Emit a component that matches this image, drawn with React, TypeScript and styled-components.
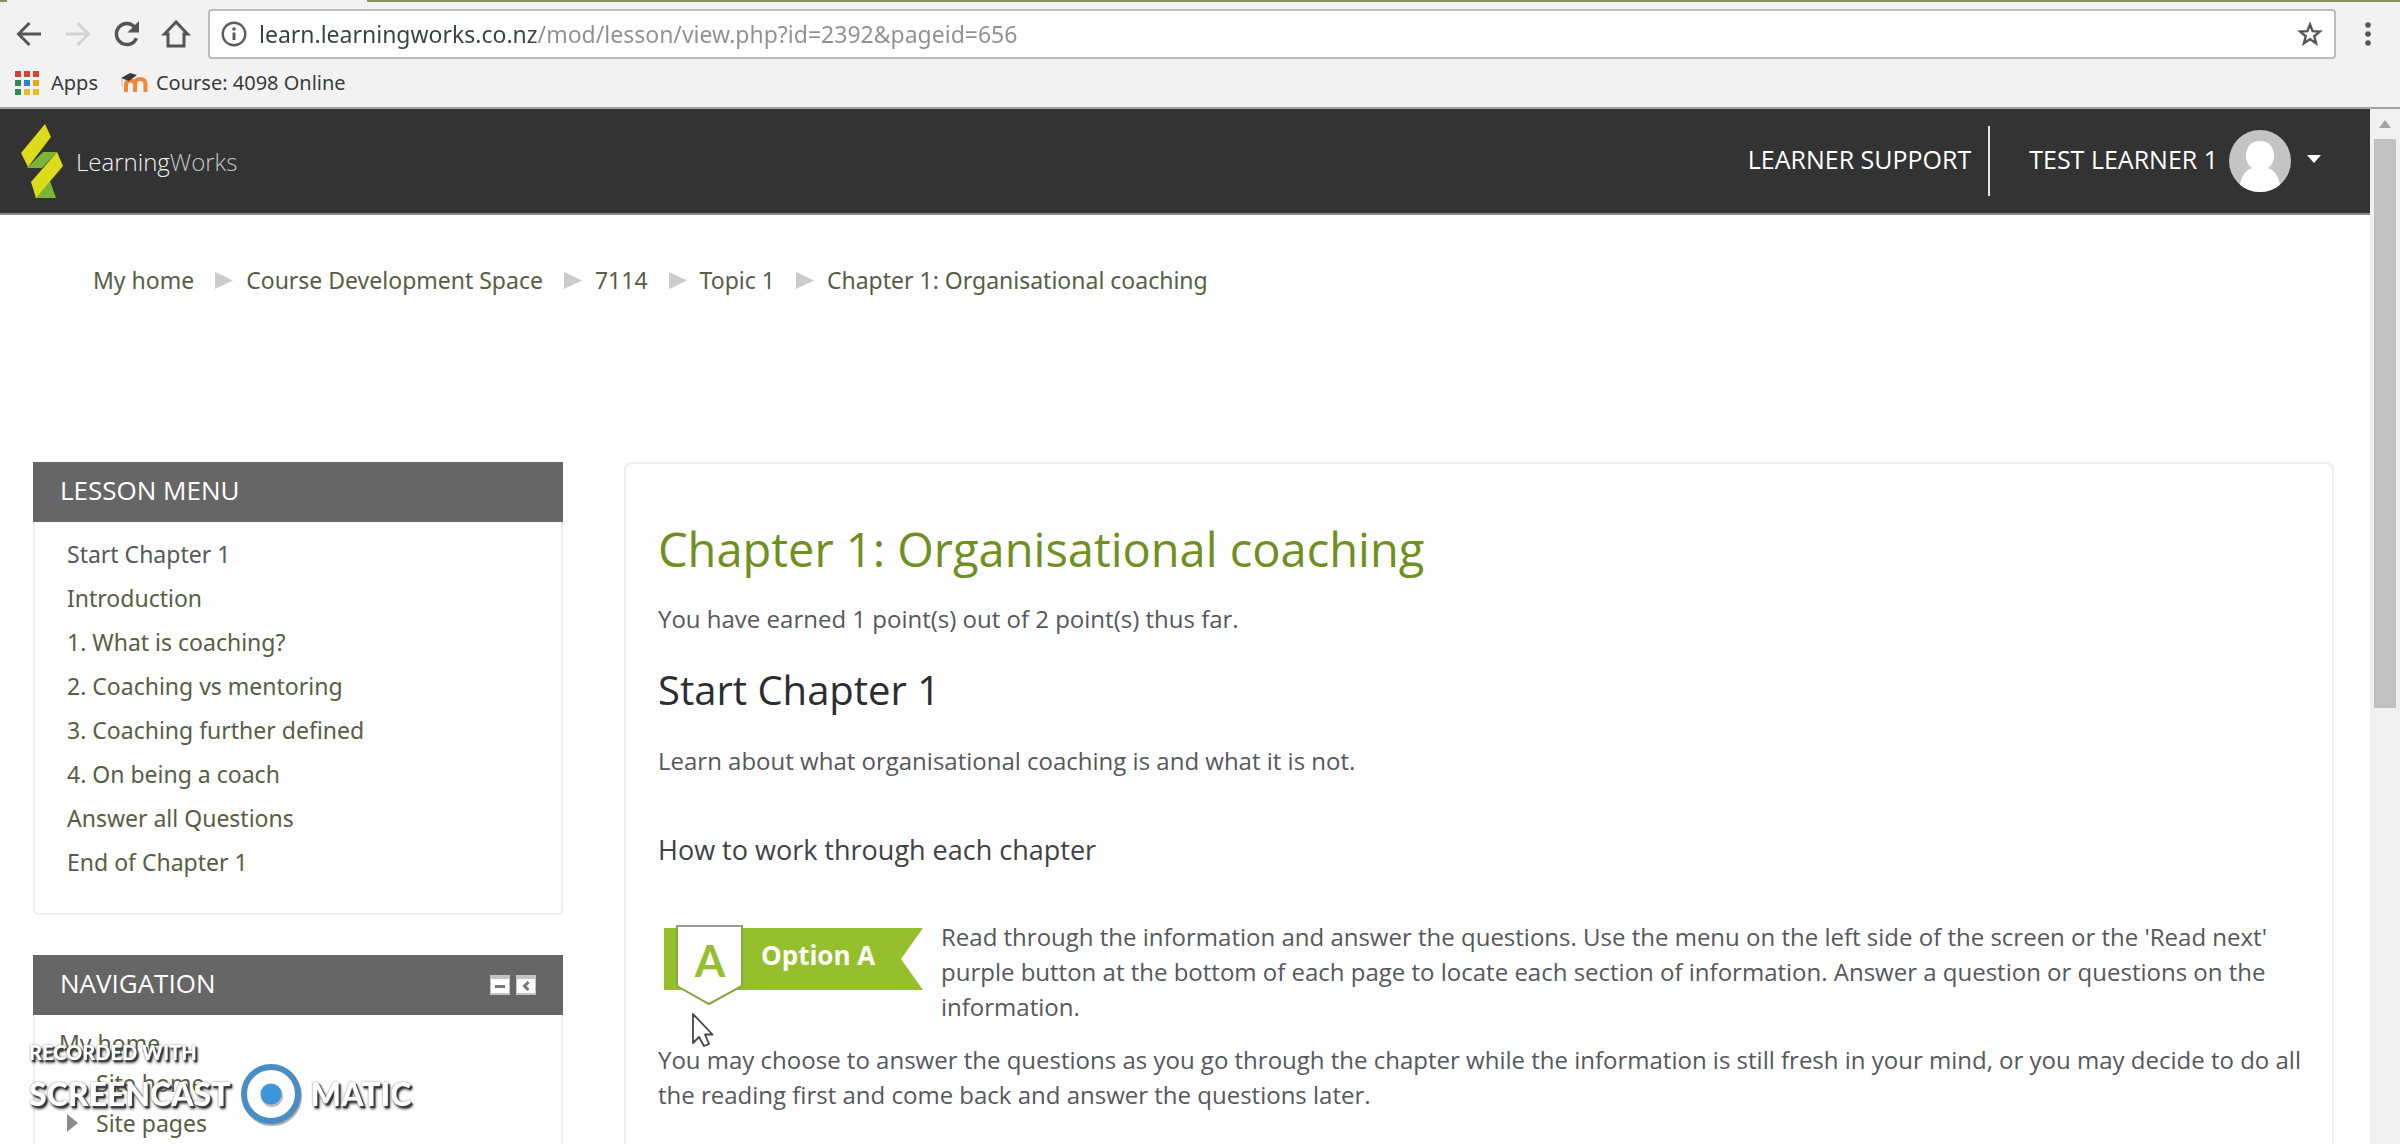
import React from "react";
import styled, { createGlobalStyle } from "styled-components";

const sans = `"Open Sans", "Noto Sans", sans-serif`;
const compact = `"Noto Sans", "Open Sans", sans-serif`;

const color = {
  chrome: "#f2f2f2",
  ink: "#333333",
  body: "#55585c",
  link: "#565f45",
  green: "#6f8f1f",
  banner: "#95bf2d",
  blockHead: "#666666",
  line: "#ededed",
};

const GlobalStyle = createGlobalStyle`
  *, *::before, *::after { box-sizing: border-box; }
  body { margin: 0; background: #fefefe; font-family: ${sans}; color: ${color.body}; }
  h1, h2, h3, p, ul, ol { margin: 0; padding: 0; font-weight: 400; }
  ul, ol { list-style: none; }
  a { color: inherit; text-decoration: none; }
  button { border: 0; padding: 0; background: none; font: inherit; color: inherit; }
`;

const Window = styled.div`
  display: flex;
  flex-direction: column;
  height: 100vh;
  overflow: hidden;
`;

/* Browser chrome */

const Chrome = styled.div`
  flex: none;
  background: ${color.chrome};
  border-bottom: 2px solid #a3a3a3;
  font-family: ${compact};
`;

const TabStrip = styled.div`
  display: grid;
  grid-template-columns: 7px 360px 1fr;
  height: 2px;
`;

const Frame = styled.div`
  background: #8b8b66;
`;

const Toolbar = styled.div`
  display: flex;
  align-items: center;
  padding: 7px 0 0 4px;
`;

const ToolButton = styled.button<{ $wide?: boolean }>`
  flex: none;
  display: grid;
  place-items: center;
  width: ${(p) => (p.$wide ? 64 : 49)}px;
  height: 48px;
`;

const Omnibox = styled.form`
  flex: 1;
  min-width: 0;
  display: flex;
  align-items: center;
  gap: 12px;
  height: 50px;
  margin-left: 8px;
  padding: 0 8px 0 11px;
  background: #fff;
  border: 2px solid #bcbcbc;
  border-radius: 4px;
`;

const Address = styled.input`
  flex: 1;
  min-width: 0;
  height: 100%;
  padding: 0;
  border: 0;
  outline: 0;
  font: 23px ${compact};
  color: transparent;
  background: linear-gradient(90deg, #3c3f44 278px, #909090 278px);
  background-clip: text;
  -webkit-background-clip: text;
`;

const StarButton = styled.button`
  display: grid;
  place-items: center;
  width: 32px;
  height: 32px;
`;

const Bookmarks = styled.nav`
  display: flex;
  align-items: center;
  gap: 22px;
  height: 48px;
  padding-left: 15px;
`;

const Bookmark = styled.a<{ $gap: number }>`
  display: flex;
  align-items: center;
  gap: ${(p) => p.$gap}px;
  font-size: 20px;
  line-height: 28px;
  color: #3a3a3a;
`;

/* Page viewport */

const Viewport = styled.div`
  flex: 1;
  min-height: 0;
  display: flex;
`;

const Site = styled.div`
  flex: 1;
  min-width: 0;
  overflow: hidden;
`;

const ScrollTrack = styled.div`
  flex: none;
  display: flex;
  flex-direction: column;
  width: 30px;
  background: #f0f0f0;
`;

const ScrollArrow = styled.button`
  display: grid;
  place-items: center;
  height: 30px;
`;

const ScrollThumb = styled.div`
  flex: 0 0 55%;
  margin: 0 4px;
  background: #c1c1c1;
`;

const SiteHeader = styled.header`
  display: flex;
  align-items: center;
  justify-content: space-between;
  height: 106px;
  padding: 0 49px 0 20px;
  background: ${color.ink};
  border-bottom: 2px solid #8a8a8a;
  color: #fff;
`;

const Brand = styled.a`
  display: flex;
  align-items: center;
  gap: 12px;
  font-size: 24px;
  font-weight: 300;
  color: #f2f2f2;
`;

const BrandTail = styled.span`
  color: #c4c4c4;
`;

const UserNav = styled.nav`
  display: flex;
  align-items: center;
  font-size: 25px;
  line-height: 34px;
`;

const NavLabel = styled.span`
  padding-bottom: 4px;
`;

const SupportLink = styled.a`
  display: flex;
  align-items: center;
  height: 70px;
  padding-right: 17px;
  border-right: 2px solid #e4e4e4;
`;

const UserMenu = styled.button`
  display: flex;
  align-items: center;
  padding-left: 39px;
`;

const Avatar = styled.svg`
  margin: 0 16px 0 11px;
`;

const Crumbs = styled.ol`
  display: flex;
  flex-wrap: wrap;
  gap: 13px;
  padding: 48px 93px 0;
  font: 23px/34px ${compact};
  color: ${color.link};
`;

const Crumb = styled.li`
  display: flex;
  align-items: center;
  gap: 21px;
`;

const Columns = styled.div`
  display: grid;
  grid-template-columns: 53fr 171fr;
  align-items: start;
  gap: 61px;
  padding: 165px 36px 0 33px;
`;

const Sidebar = styled.aside`
  display: grid;
  gap: 40px;
`;

const BlockHead = styled.div`
  display: flex;
  align-items: center;
  justify-content: space-between;
  height: 60px;
  padding: 0 27px;
  background: ${color.blockHead};
  color: #fff;
`;

const BlockTitle = styled.h2`
  padding-bottom: 4px;
  font-size: 26px;
  line-height: 36px;
`;

const BlockTools = styled.div`
  display: flex;
  gap: 6px;
  padding-top: 4px;
`;

const BlockBody = styled.div<{ $pad: string }>`
  padding: ${(p) => p.$pad};
  border: 2px solid ${color.line};
  border-top: 0;
  border-radius: 0 0 6px 6px;
  font: 23px ${compact};
  color: ${color.link};
`;

const MenuItem = styled.li<{ $current?: boolean }>`
  line-height: 44px;
  color: ${(p) => (p.$current ? "#55585c" : "inherit")};
`;

const TreeItem = styled.li<{ $nested?: boolean }>`
  display: grid;
  grid-template-columns: ${(p) => (p.$nested ? "29px 1fr" : "1fr")};
  align-items: center;
  padding-left: ${(p) => (p.$nested ? 8 : 0)}px;
  line-height: 40px;
`;

const Lesson = styled.main`
  min-height: 760px;
  padding: 55px 24px 40px 32px;
  border: 2px solid ${color.line};
  border-radius: 8px;
  font-size: 24px;
  line-height: 35px;
`;

const LessonTitle = styled.h1`
  font-size: 47px;
  line-height: 60px;
  color: ${color.green};
`;

const PageTitle = styled.h2`
  margin-top: 28px;
  font-size: 40px;
  line-height: 52px;
  color: #2b2d30;
`;

const SectionTitle = styled.h3`
  margin-top: 54px;
  font-size: 27px;
  line-height: 35px;
  color: #3f4246;
`;

const Para = styled.p<{ $top?: number }>`
  margin-top: ${(p) => p.$top ?? 0}px;
`;

const OptionRow = styled.div`
  position: relative;
  display: flex;
  align-items: flex-start;
  gap: 17px;
  margin-top: 52px;
  padding-left: 6px;
`;

const OptionBanner = styled.svg`
  flex: none;
  margin-top: 5px;
`;

const Pointer = styled.svg`
  position: absolute;
  left: 33px;
  top: 93px;
`;

const Watermark = styled.div`
  position: fixed;
  left: 29px;
  bottom: 18px;
  font-family: Lato, sans-serif;
  font-weight: 900;
  color: #fff;
  text-shadow: 0 0 2px #777, 2px 2px 1px #333, 2px 3px 3px #444;
`;

const WatermarkTop = styled.div`
  font-size: 20px;
  line-height: 20px;
`;

const WatermarkName = styled.div`
  display: flex;
  align-items: center;
  gap: 8px;
  font-size: 32px;
  line-height: 64px;
`;

const Triangle = ({ w, h, fill }: { w: number; h: number; fill: string }) => (
  <svg width={w} height={h} viewBox="0 0 10 10" preserveAspectRatio="none" aria-hidden>
    <path d="M0 0L10 5L0 10Z" fill={fill} />
  </svg>
);

const crumbs = ["My home", "Course Development Space", "7114", "Topic 1", "Chapter 1: Organisational coaching"];

const lessonMenu = [
  "Start Chapter 1",
  "Introduction",
  "1. What is coaching?",
  "2. Coaching vs mentoring",
  "3. Coaching further defined",
  "4. On being a coach",
  "Answer all Questions",
  "End of Chapter 1",
];

const appDots = ["#d8432f", "#d8432f", "#d8432f", "#2f8a54", "#2f7de0", "#e8a51f", "#2f8a54", "#eeb52d", "#eeb52d"];

function BrowserChrome() {
  return (
    <Chrome>
      <TabStrip>
        <Frame />
        <span />
        <Frame />
      </TabStrip>
      <Toolbar>
        <ToolButton aria-label="Back">
          <svg width="26" height="26" viewBox="0 0 26 26" fill="none" stroke="#555" strokeWidth="3">
            <path d="M25 13H3M13.500 2L2.500 13L13.500 24" />
          </svg>
        </ToolButton>
        <ToolButton aria-label="Forward">
          <svg width="26" height="26" viewBox="0 0 26 26" fill="none" stroke="#d3d3d3" strokeWidth="3">
            <path d="M1 13H23M12.500 2L23.500 13L12.500 24" />
          </svg>
        </ToolButton>
        <ToolButton aria-label="Reload">
          <svg width="28" height="28" viewBox="0 0 28 28" fill="none" stroke="#555" strokeWidth="3.400">
            <path d="M23.500 18.200A10.500 10.500 0 1 1 21.500 6.800" />
            <path d="M26 1V12.500H14.500Z" fill="#555" stroke="none" />
          </svg>
        </ToolButton>
        <ToolButton aria-label="Home">
          <svg width="30" height="30" viewBox="0 0 30 30" fill="none" stroke="#555" strokeWidth="3">
            <path d="M15 3L3.500 15H7V27H23V15H26.500Z" />
          </svg>
        </ToolButton>
        <Omnibox>
          <svg width="26" height="26" viewBox="0 0 26 26" fill="none" aria-hidden>
            <circle cx="13" cy="13" r="11.300" stroke="#5c5c5c" strokeWidth="2.400" />
            <path d="M13 11.500V19" stroke="#5c5c5c" strokeWidth="3" />
            <circle cx="13" cy="8" r="1.800" fill="#5c5c5c" />
          </svg>
          <Address
            aria-label="Address"
            spellCheck={false}
            defaultValue="learn.learningworks.co.nz/mod/lesson/view.php?id=2392&pageid=656"
          />
          <StarButton type="button" aria-label="Bookmark this page">
            <svg width="26" height="26" viewBox="0 0 26 26" fill="none" stroke="#555" strokeWidth="2.400">
              <path d="M13 3.500L15.600 10.200L22.800 10.600L17.200 15.200L19.100 22.200L13 18.200L6.900 22.200L8.800 15.200L3.200 10.600L10.400 10.200Z" />
            </svg>
          </StarButton>
        </Omnibox>
        <ToolButton $wide aria-label="Menu">
          <svg width="8" height="26" viewBox="0 0 8 26" fill="#555">
            <circle cx="4" cy="4" r="2.800" />
            <circle cx="4" cy="13" r="2.800" />
            <circle cx="4" cy="22" r="2.800" />
          </svg>
        </ToolButton>
      </Toolbar>
      <Bookmarks>
        <Bookmark href="#apps" $gap={12}>
          <svg width="24" height="24" viewBox="0 0 24 24" aria-hidden>
            {appDots.map((fill, i) => (
              <rect key={i} x={(i % 3) * 9} y={Math.floor(i / 3) * 9} width="6" height="6" fill={fill} />
            ))}
          </svg>
          Apps
        </Bookmark>
        <Bookmark href="#course" $gap={8}>
          <svg width="28" height="22" viewBox="0 0 28 22" fill="none" aria-hidden>
            <path d="M6 20V13Q6 8.500 10.500 8.500Q15 8.500 15 13V20M15 13Q15 7 20 7Q25.500 7 25.500 12.500V20" stroke="#ee8a35" strokeWidth="4" />
            <path d="M1 6L10 1L17 3L9 9Z" fill="#3a3a3a" />
            <path d="M2 6V14" stroke="#d9a98a" strokeWidth="1" />
          </svg>
          Course: 4098 Online
        </Bookmark>
      </Bookmarks>
    </Chrome>
  );
}

function Header() {
  return (
    <SiteHeader>
      <Brand href="#home">
        <svg width="44" height="76" viewBox="0 0 44 76" aria-hidden>
          <path d="M23 29H37L22 45L7 45Z" fill="#78b53a" />
          <path d="M30 58L36 75H15Z" fill="#78b53a" />
          <path d="M25 1L31 14L8 44L1 30Z" fill="#dcdc1c" />
          <path d="M37 29L43 43L16 75L11 59Z" fill="#dcdc1c" />
        </svg>
        <span>
          Learning<BrandTail>Works</BrandTail>
        </span>
      </Brand>
      <UserNav>
        <SupportLink href="#support">
          <NavLabel>LEARNER SUPPORT</NavLabel>
        </SupportLink>
        <UserMenu>
          <NavLabel>TEST LEARNER 1</NavLabel>
          <Avatar width="62" height="62" viewBox="0 0 62 62" aria-hidden>
            <clipPath id="face">
              <circle cx="31" cy="31" r="31" />
            </clipPath>
            <g clipPath="url(#face)">
              <rect width="62" height="62" fill="#c4c4c4" />
              <path
                d="M31 11C40 11 45 17 45 26C45 32 42 36 39 38C47 41 51 48 52 62H10C11 48 15 41 23 38C20 36 17 32 17 26C17 17 22 11 31 11Z"
                fill="#fff"
              />
            </g>
          </Avatar>
          <svg width="14" height="12" viewBox="0 0 14 12" aria-hidden>
            <path d="M0 0H14L7 8Z" fill="#fff" />
          </svg>
        </UserMenu>
      </UserNav>
    </SiteHeader>
  );
}

function NavigationTools() {
  return (
    <BlockTools>
      <button aria-label="Hide block">
        <svg width="20" height="20" viewBox="0 0 20 20">
          <rect width="20" height="20" fill="#c4c4c4" />
          <rect x="1" y="4" width="18" height="14" fill="#fff" />
          <rect x="5" y="10" width="10" height="3" fill="#777" />
        </svg>
      </button>
      <button aria-label="Dock block">
        <svg width="20" height="20" viewBox="0 0 20 20">
          <rect width="20" height="20" fill="#c4c4c4" />
          <rect x="1" y="4" width="18" height="14" fill="#fff" />
          <path d="M12.500 7L8.500 11L12.500 15" fill="none" stroke="#777" strokeWidth="3" />
        </svg>
      </button>
    </BlockTools>
  );
}

export default function App() {
  return (
    <Window>
      <GlobalStyle />
      <BrowserChrome />
      <Viewport>
        <Site>
          <Header />
          <Crumbs>
            {crumbs.map((label, i) => (
              <Crumb key={label}>
                <a href="#crumb">{label}</a>
                {i < crumbs.length - 1 && <Triangle w={18} h={17} fill="#cccccc" />}
              </Crumb>
            ))}
          </Crumbs>
          <Columns>
            <Sidebar>
              <section>
                <BlockHead>
                  <BlockTitle>LESSON MENU</BlockTitle>
                </BlockHead>
                <BlockBody $pad="10px 32px 29px">
                  <ul>
                    {lessonMenu.map((label, i) => (
                      <MenuItem key={label} $current={i === 0}>
                        {i === 0 ? label : <a href="#lesson">{label}</a>}
                      </MenuItem>
                    ))}
                  </ul>
                </BlockBody>
              </section>
              <section>
                <BlockHead>
                  <BlockTitle>NAVIGATION</BlockTitle>
                  <NavigationTools />
                </BlockHead>
                <BlockBody $pad="8px 24px 60px">
                  <ul>
                    <TreeItem>
                      <a href="#home">My home</a>
                    </TreeItem>
                    <TreeItem $nested>
                      <span />
                      <a href="#site">Site home</a>
                    </TreeItem>
                    <TreeItem $nested>
                      <Triangle w={11} h={18} fill="#8c8c8c" />
                      <span>Site pages</span>
                    </TreeItem>
                  </ul>
                </BlockBody>
              </section>
            </Sidebar>
            <Lesson>
              <LessonTitle>Chapter 1: Organisational coaching</LessonTitle>
              <Para $top={22}>You have earned 1 point(s) out of 2 point(s) thus far.</Para>
              <PageTitle>Start Chapter 1</PageTitle>
              <Para $top={27}>Learn about what organisational coaching is and what it is not.</Para>
              <SectionTitle>How to work through each chapter</SectionTitle>
              <OptionRow>
                <OptionBanner width="260" height="82" viewBox="0 0 260 82">
                  <path d="M0 4H259L237 35L259 66H0Z" fill={color.banner} />
                  <path d="M13 2H78V62L45 80L13 62Z" fill="#fff" stroke="#87a445" strokeWidth="2" />
                  <path d="M13 2H78" stroke="#9a9a9a" strokeWidth="2" />
                  <text x="46" y="53" textAnchor="middle" fontFamily="Lato, sans-serif" fontWeight="700" fontSize="44" fill={color.banner}>
                    A
                  </text>
                  <text x="97" y="41" fontFamily="Open Sans, sans-serif" fontWeight="700" fontSize="26" fill="#fff">
                    Option A
                  </text>
                </OptionBanner>
                <Para>
                  Read through the information and answer the questions. Use the menu on the left side of the screen or the
                  'Read next' purple button at the bottom of each page to locate each section of information. Answer a
                  question or questions on the information.
                </Para>
                <Pointer width="24" height="38" viewBox="0 0 24 38" aria-hidden>
                  <path
                    d="M2 2V31L8 25L13 34L18 32L14 22.500H21.500Z"
                    fill="#fff"
                    stroke="#444"
                    strokeWidth="1.800"
                    strokeLinejoin="round"
                  />
                </Pointer>
              </OptionRow>
              <Para $top={18}>
                You may choose to answer the questions as you go through the chapter while the information is still fresh in
                your mind, or you may decide to do all the reading first and come back and answer the questions later.
              </Para>
            </Lesson>
          </Columns>
        </Site>
        <ScrollTrack>
          <ScrollArrow aria-label="Scroll up">
            <svg width="12" height="8" viewBox="0 0 12 8">
              <path d="M6 0L12 8H0Z" fill="#a3a3a3" />
            </svg>
          </ScrollArrow>
          <ScrollThumb />
        </ScrollTrack>
      </Viewport>
      <Watermark>
        <WatermarkTop>RECORDED WITH</WatermarkTop>
        <WatermarkName>
          SCREENCAST
          <svg width="64" height="64" viewBox="0 0 64 64" aria-hidden>
            <circle cx="33" cy="34" r="27" fill="none" stroke="#777" strokeWidth="6" opacity="0.600" />
            <circle cx="32" cy="32" r="27" fill="#fff" stroke="#4a8cc4" strokeWidth="6" />
            <circle cx="33" cy="34" r="11" fill="#777" opacity="0.500" />
            <circle cx="32" cy="32" r="10.500" fill="#3d96da" />
          </svg>
          MATIC
        </WatermarkName>
      </Watermark>
    </Window>
  );
}
